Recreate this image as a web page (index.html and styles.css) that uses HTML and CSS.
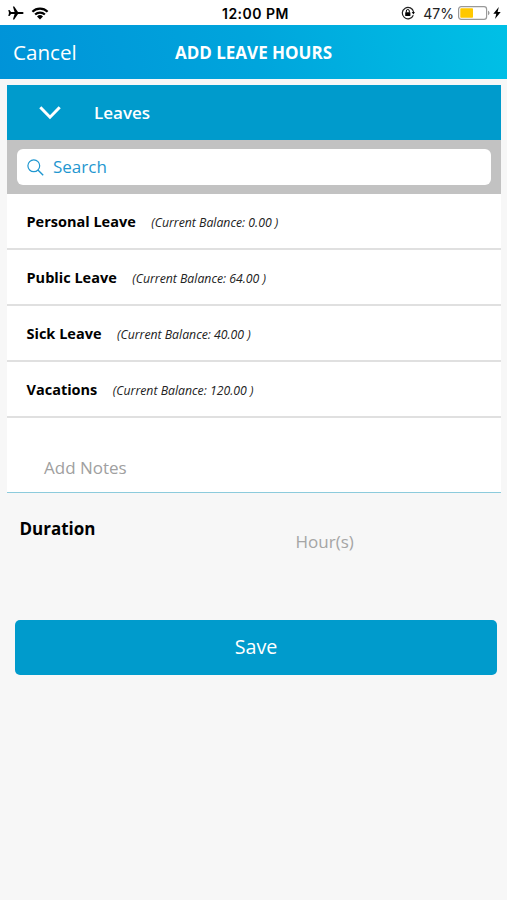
FILE: index.html
```html
<!DOCTYPE html>
<html lang="en">
<head>
  <meta charset="UTF-8">
  <meta name="viewport" content="width=device-width, initial-scale=1.0">
  <title>Add Leave Hours</title>
  <link rel="stylesheet" href="styles.css">
</head>
<body>
  <!-- Status bar -->
  <div class="status-bar">
    <div class="status-left">
      <svg class="plane" width="16" height="14" viewBox="0 0 16 14">
        <path d="M15.600 7c0-.7-.8-1-1.600-1h-4L6.200.5H4.900L6.600 6H3L1.500 4H.3L1 7 .3 10h1.200L3 8h3.600L4.900 13.500h1.300L10 8h4c.8 0 1.600-.3 1.600-1z"/>
      </svg>
      <svg class="wifi" width="18" height="13" viewBox="0 0 18 13">
        <path d="M1.400 4.700a11 11 0 0 1 15.200 0M4.100 7.500a7.200 7.200 0 0 1 9.800 0" fill="none" stroke="#000" stroke-width="2.200"/>
        <path d="M9 12.500l-3-3.100a4.400 4.400 0 0 1 6 0z"/>
      </svg>
    </div>
    <div class="status-time">12:00 PM</div>
    <div class="status-right">
      <svg class="lock" width="14" height="14" viewBox="0 0 14 14">
        <path d="M12.300 9.200A5.700 5.700 0 1 1 12.600 6" fill="none" stroke="#222" stroke-width="1.200"/>
        <path d="M10.700 5.900h3.200l-1.500 2.500z"/>
        <rect x="4.200" y="6.200" width="5.200" height="3.900" rx=".5"/>
        <path d="M5.300 6.500V5a1.500 1.500 0 0 1 3 0v1.500" fill="none" stroke="#000"/>
      </svg>
      <span class="percent">47%</span>
      <svg class="battery" width="32" height="14" viewBox="0 0 32 14">
        <rect x=".6" y=".6" width="28" height="12.800" rx="2.600" fill="#fff" stroke="#999" stroke-width="1.200"/>
        <rect x="2.300" y="2.300" width="12.700" height="9.400" rx=".8" fill="#ffc800"/>
        <path d="M30 4.800c2 .7 2 3.700 0 4.400z" fill="#999"/>
      </svg>
      <svg class="bolt" width="8" height="12" viewBox="0 0 8 12">
        <path d="M5.800 0L.3 6.700h3L2 12l5.700-7H4.600z"/>
      </svg>
    </div>
  </div>

  <!-- Header -->
  <header class="navbar">
    <a class="cancel" href="#">Cancel</a>
    <h1>ADD LEAVE HOURS</h1>
  </header>

  <!-- Form -->
  <main class="form-container">
    <section class="leaves">
      <div class="leaves-title">
        <svg width="22" height="14" viewBox="0 0 22 14">
          <path d="M1.300 1.300L11 11.200l9.700-9.900" fill="none" stroke="#fff" stroke-width="3"/>
        </svg>
        <span>Leaves</span>
      </div>
      <div class="search-bar">
        <div class="search-box">
          <svg width="17" height="17" viewBox="0 0 17 17">
            <path d="M10.900 10.900l5.300 5.300" fill="none" stroke="#1f97d0" stroke-width="1.400"/>
            <circle cx="6.800" cy="6.800" r="5.900" fill="none" stroke="#1f97d0" stroke-width="1.200"/>
          </svg>
          <span>Search</span>
        </div>
      </div>
      <ul class="leave-list">
        <li><b>Personal Leave</b><i>(Current Balance: 0.00 )</i></li>
        <li><b>Public Leave</b><i>(Current Balance: 64.00 )</i></li>
        <li><b>Sick Leave</b><i>(Current Balance: 40.00 )</i></li>
        <li><b>Vacations</b><i>(Current Balance: 120.00 )</i></li>
      </ul>
      <div class="notes">Add Notes</div>
    </section>

    <div class="duration">
      <label>Duration</label>
      <span class="hours">Hour(s)</span>
    </div>

    <button type="submit" class="save-button">Save</button>
  </main>
</body>
</html>
```
FILE: styles.css
```css
/* General Styles */
* {
  box-sizing: border-box;
}

body {
  font-family: "Open Sans", "Noto Sans", sans-serif;
  margin: 0;
  min-height: 900px;
  background-color: #f7f7f7;
  color: #000;
  white-space: nowrap;
}

svg {
  display: block;
  flex: none;
}

/* Status bar */
.status-bar {
  display: grid;
  grid-template-columns: 1fr auto 1fr;
  align-items: center;
  height: 25px;
  padding: 1px 6px 0 8px;
  background-color: #fff;
  font-family: Inter, sans-serif;
  font-size: 14px;
}

.status-left,
.status-right {
  display: flex;
  align-items: center;
}

.wifi {
  margin-left: 7px;
}

.status-time {
  padding-left: 2px;
  font-size: 14px;
  font-weight: 600;
  letter-spacing: 0.5px;
}

.status-right {
  justify-content: flex-end;
}

.percent {
  margin: 0 4px 0 8px;
  color: #222;
}

.bolt {
  margin-left: 3px;
}

/* Header */
.navbar {
  display: grid;
  grid-template-columns: 1fr auto 1fr;
  align-items: center;
  height: 54px;
  padding: 0 13px;
  background: linear-gradient(75deg, #0093d8, #00a5dc 50%, #00c0e6);
  color: #fff;
}

.navbar h1 {
  margin: 0;
  font-size: 17px;
  font-weight: 700;
}

.cancel {
  color: #fff;
  font-size: 20.600px;
  text-decoration: none;
}

/* Form */
.form-container {
  padding: 6px 6px 0 7px;
}

.leaves {
  background-color: #fff;
  border-bottom: 1px solid #8ccbdc;
}

.leaves-title {
  display: flex;
  align-items: center;
  gap: 33px;
  height: 55px;
  padding-left: 32px;
  background-color: #009bcc;
  color: #fff;
  font-size: 17px;
  font-weight: 600;
}

.search-bar {
  height: 54px;
  padding: 9px 10px;
  background-color: #c2c2c2;
}

.search-box {
  display: flex;
  align-items: center;
  gap: 9px;
  height: 36px;
  padding-left: 10px;
  border-radius: 6px;
  background-color: #fff;
  color: #1f97d0;
  font-size: 17px;
}

.search-box span {
  padding-bottom: 2px;
}

.leave-list {
  margin: 0;
  padding: 0;
  list-style: none;
}

.leave-list li {
  display: flex;
  align-items: center;
  gap: 15.500px;
  height: 56px;
  padding-left: 19.500px;
  border-bottom: 2px solid #e0e0e0;
}

.leave-list b {
  font-size: 14.500px;
}

.leave-list i {
  padding-top: 2px;
  color: #222;
  font-size: 12.250px;
}

.notes {
  height: 74px;
  padding: 38px 0 0 37px;
  color: #a0a0a0;
  font-size: 17px;
  line-height: 24px;
}

/* Duration */
.duration {
  display: grid;
  grid-template-columns: 276px 1fr;
  height: 127px;
  padding: 24px 0 0 12.500px;
}

.duration label {
  font-size: 17px;
  font-weight: 700;
  line-height: 24px;
}

.hours {
  padding-top: 13px;
  color: #a5a5a5;
  font-size: 17px;
  line-height: 24px;
}

.save-button {
  display: block;
  width: 482px;
  height: 55px;
  margin-left: 8px;
  padding-bottom: 3px;
  border: none;
  border-radius: 5px;
  background-color: #009bcc;
  color: #fff;
  font-family: inherit;
  font-size: 19.700px;
}
```
